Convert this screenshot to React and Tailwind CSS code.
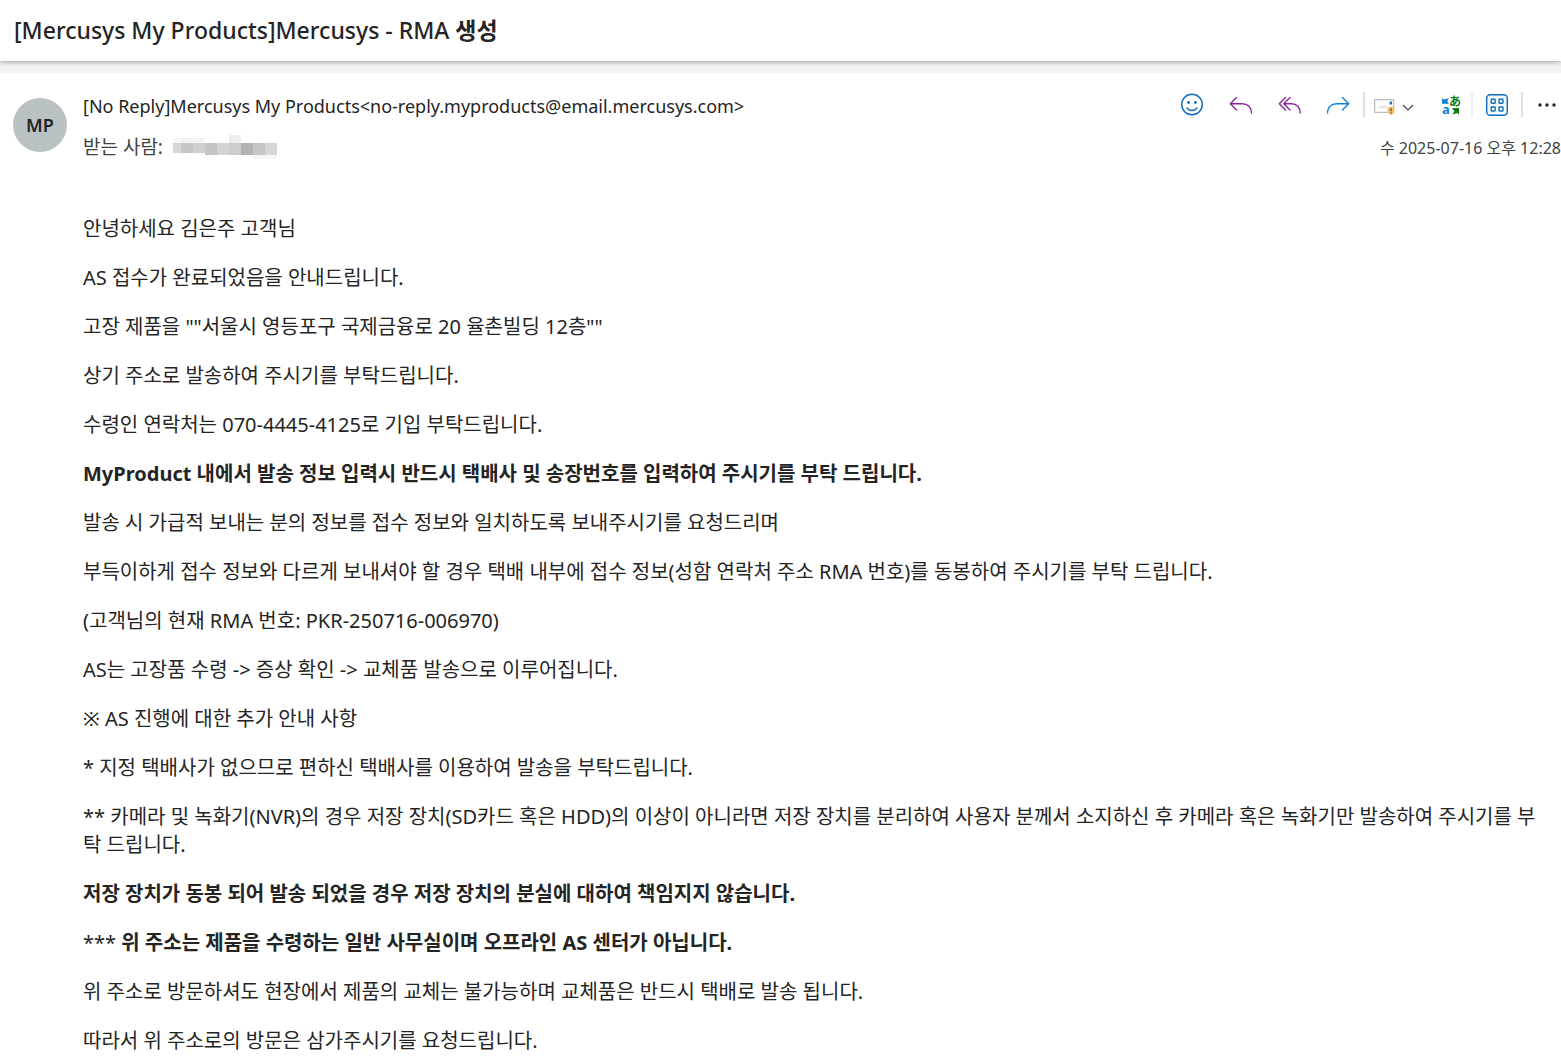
const paragraphs = [
    { text: "안녕하세요 김은주 고객님" },
    { text: "AS 접수가 완료되었음을 안내드립니다." },
    { text: "고장 제품을 \"\"서울시 영등포구 국제금융로 20 율촌빌딩 12층\"\"" },
    { text: "상기 주소로 발송하여 주시기를 부탁드립니다." },
    { text: "수령인 연락처는 070-4445-4125로 기입 부탁드립니다." },
    { text: "MyProduct 내에서 발송 정보 입력시 반드시 택배사 및 송장번호를 입력하여 주시기를 부탁 드립니다.", bold: true },
    { text: "발송 시 가급적 보내는 분의 정보를 접수 정보와 일치하도록 보내주시기를 요청드리며" },
    { text: "부득이하게 접수 정보와 다르게 보내셔야 할 경우 택배 내부에 접수 정보(성함 연락처 주소 RMA 번호)를 동봉하여 주시기를 부탁 드립니다." },
    { text: "(고객님의 현재 RMA 번호: PKR-250716-006970)" },
    { text: "AS는 고장품 수령 -> 증상 확인 -> 교체품 발송으로 이루어집니다." },
    { text: "※ AS 진행에 대한 추가 안내 사항" },
    { text: "* 지정 택배사가 없으므로 편하신 택배사를 이용하여 발송을 부탁드립니다." },
    { text: "** 카메라 및 녹화기(NVR)의 경우 저장 장치(SD카드 혹은 HDD)의 이상이 아니라면 저장 장치를 분리하여 사용자 분께서 소지하신 후 카메라 혹은 녹화기만 발송하여 주시기를 부탁 드립니다." },
    { text: "저장 장치가 동봉 되어 발송 되었을 경우 저장 장치의 분실에 대하여 책임지지 않습니다.", bold: true },
    { prefix: "*** ", text: "위 주소는 제품을 수령하는 일반 사무실이며 오프라인 AS 센터가 아닙니다.", bold: true },
    { text: "위 주소로 방문하셔도 현장에서 제품의 교체는 불가능하며 교체품은 반드시 택배로 발송 됩니다." },
    { text: "따라서 위 주소로의 방문은 삼가주시기를 요청드립니다." },
];

// x, y, width, height, colour
const maskBlocks = [
    [1, 3, 8, 5, "#f7f7f7"],
    [9, 3, 22, 5, "#f3f3f3"],
    [0, 8, 8, 10, "#d6d6d6"],
    [8, 8, 12, 10, "#c6c6c6"],
    [20, 8, 12, 10, "#d0d0d0"],
    [32, 8, 12, 12, "#c4c4c4"],
    [44, 8, 12, 12, "#d3d3d3"],
    [56, 0, 12, 8, "#ededed"],
    [56, 8, 12, 12, "#cccccc"],
    [68, 8, 12, 12, "#b3b3b3"],
    [80, 8, 12, 12, "#c6c6c6"],
    [92, 8, 12, 12, "#d6d6d6"],
    [80, 20, 24, 4, "#f7f7f7"],
];

function IconButton({ label, children }) {
    return (
        <button type="button" aria-label={label} className="flex h-6 w-6 items-center justify-center">
            {children}
        </button>
    );
}

function Divider({ light }) {
    return <div className={light ? "h-[25px] w-[2px] bg-[#f0f0f0]" : "h-[25px] w-[2px] bg-[#e0e0e0]"} />;
}

function SmileIcon() {
    return (
        <svg width="24" height="24" viewBox="0 0 24 24" fill="none" stroke="#0f6cbd" strokeWidth="1.4">
            <circle cx="12" cy="11.500" r="10.300" />
            <circle cx="8.600" cy="9.500" r="1.400" fill="#0f6cbd" stroke="none" />
            <circle cx="15.400" cy="9.500" r="1.400" fill="#0f6cbd" stroke="none" />
            <path d="M7 15c2.400 3.300 7.600 3.300 10 0" strokeLinecap="round" />
        </svg>
    );
}

function ReplyIcon() {
    return (
        <svg width="24" height="24" viewBox="0 0 24 24" fill="none" stroke="#8f259f" strokeWidth="1.4" strokeLinecap="round" strokeLinejoin="round">
            <path d="M7.500 4.500 1.300 10.700 7.500 16.900M1.600 10.700h11.900c5.200 0 9 3.600 9 9.400" />
        </svg>
    );
}

function ReplyAllIcon() {
    return (
        <svg width="24" height="24" viewBox="0 0 24 24" fill="none" stroke="#8f259f" strokeWidth="1.4" strokeLinecap="round" strokeLinejoin="round">
            <path d="M7.500 4.500 1.300 10.700l6.200 6.200M12 4.500 5.800 10.700l6.200 6.200M6.200 10.700h7.600c4.800 0 8.400 3.600 8.400 9.400" />
        </svg>
    );
}

function ForwardIcon() {
    return (
        <svg width="24" height="24" viewBox="0 0 24 24" fill="none" stroke="#1080d8" strokeWidth="1.4" strokeLinecap="round" strokeLinejoin="round">
            <path d="M15.500 4.500l6.200 6.200-6.200 6.200M21.400 10.700H9.500c-5.200 0-9 3.600-9 9.400" />
        </svg>
    );
}

function MailWarningIcon() {
    return (
        <svg width="24" height="24" viewBox="0 0 24 24" fill="none">
            <rect x="1.600" y="6.600" width="19" height="12.800" fill="#fcfcfc" stroke="#bcbcbc" strokeWidth="1.200" />
            <path d="M6 14h8" stroke="#d0d0d0" strokeWidth="1.200" />
            <rect x="16.500" y="8.500" width="2.500" height="3" fill="#2b6fc4" />
            <path d="M18 13.500l3.500 1.200v3c0 2-1.500 3.300-3.500 4.300-2-1-3.500-2.300-3.500-4.300v-3z" fill="#f5c26b" />
            <path d="M18 15.200v3M18 19.200v1.200" stroke="#5c4a2a" strokeWidth="1.300" />
        </svg>
    );
}

function TranslateIcon() {
    return (
        <svg width="24" height="24" viewBox="0 0 24 24" fontWeight="700">
            <path d="M3 5l1.600 1.400L10 5.200 8.200 8l1.800 2.800H3z" fill="#1080d8" />
            <text x="3" y="21" fontSize="13" fill="#1080d8">a</text>
            <text x="10" y="13" fontSize="12" fill="#107c10">あ</text>
            <path d="M13 15h7v6.500l-1.600-1.400-4.900 1.400 1.800-3.300z" fill="#107c10" />
        </svg>
    );
}

function AppsIcon() {
    return (
        <svg width="24" height="24" viewBox="0 0 24 24" fill="none" stroke="#0f6cbd" strokeWidth="1.4">
            <rect x="1.700" y="1.700" width="20.600" height="20.600" rx="3.500" fill="#f3f8fd" />
            <rect x="6.200" y="6.200" width="4" height="4" rx=".7" />
            <rect x="14" y="6.200" width="4" height="4" rx=".7" />
            <rect x="6.200" y="14" width="4" height="4" rx=".7" />
            <rect x="14" y="14" width="4" height="4" rx=".7" />
        </svg>
    );
}

function MoreIcon() {
    return (
        <svg width="24" height="24" viewBox="0 0 24 24" fill="#242424">
            <circle cx="5" cy="12" r="1.700" />
            <circle cx="12" cy="12" r="1.700" />
            <circle cx="19" cy="12" r="1.700" />
        </svg>
    );
}

function Toolbar() {
    return (
        <div className="flex items-center gap-3">
            <div className="flex items-center gap-[25px]">
                <IconButton label="반응"><SmileIcon /></IconButton>
                <IconButton label="회신"><ReplyIcon /></IconButton>
                <IconButton label="전체 회신"><ReplyAllIcon /></IconButton>
                <IconButton label="전달"><ForwardIcon /></IconButton>
            </div>
            <div className="flex items-center gap-2">
                <Divider />
                <button type="button" aria-label="보고" className="flex h-6 items-center gap-1">
                    <MailWarningIcon />
                    <svg width="14" height="24" viewBox="0 0 14 24" fill="none" stroke="#424242" strokeWidth="1.2">
                        <path d="M2 12l5 5 5-5" />
                    </svg>
                </button>
            </div>
            <div className="ml-3 flex items-center gap-2">
                <IconButton label="번역"><TranslateIcon /></IconButton>
                <Divider light />
            </div>
            <IconButton label="앱"><AppsIcon /></IconButton>
            <Divider />
            <IconButton label="기타 작업"><MoreIcon /></IconButton>
        </div>
    );
}

export default function App() {
    return (
        <div className="flex min-h-screen flex-col bg-[#f3f3f3] font-['Noto_Sans','Noto_Sans_CJK_KR',sans-serif] text-[#242424]">
            <header className="flex h-[61px] items-center bg-white px-[14px] shadow-[0_1px_5px_rgba(0,0,0,0.35)]">
                <h1 className="text-[23px] font-medium">[Mercusys My Products]Mercusys - RMA <span className="font-bold">생성</span></h1>
            </header>

            <main className="mt-3 flex-1 bg-white">
                <div className="flex items-start pt-[19px] pl-[13px]">
                    <div className="mt-[6px] flex h-[54px] w-[54px] items-center justify-center rounded-full bg-[#b9c1c5] text-lg font-semibold">
                        MP
                    </div>
                    <div className="ml-4 flex-1">
                        <div className="text-lg">[No Reply]Mercusys My Products&lt;no-reply.myproducts@email.mercusys.com&gt;</div>
                        <div className="mt-[13px] flex items-center gap-[10px] text-[19px] leading-7 text-[#424242]">
                            <span>받는 사람:</span>
                            <svg width="104" height="24" viewBox="0 0 104 24" shapeRendering="crispEdges">
                                {maskBlocks.map(([x, y, w, h, color]) => (
                                    <rect key={`${x}-${y}`} x={x} y={y} width={w} height={h} fill={color} />
                                ))}
                            </svg>
                        </div>
                    </div>
                    <div className="flex flex-col items-end">
                        <div className="pr-[2px]">
                            <Toolbar />
                        </div>
                        <time dateTime="2025-07-16T12:28" className="mt-[19px] text-base text-[#424242]">수 2025-07-16 오후 12:28</time>
                    </div>
                </div>

                <div className="mt-[54px] flex flex-col gap-[21px] pr-5 pl-[83px] text-xl">
                    {paragraphs.map((p) => (
                        <p key={p.text}>
                            {p.prefix}
                            {p.bold ? <strong>{p.text}</strong> : p.text}
                        </p>
                    ))}
                </div>
            </main>
        </div>
    );
}
